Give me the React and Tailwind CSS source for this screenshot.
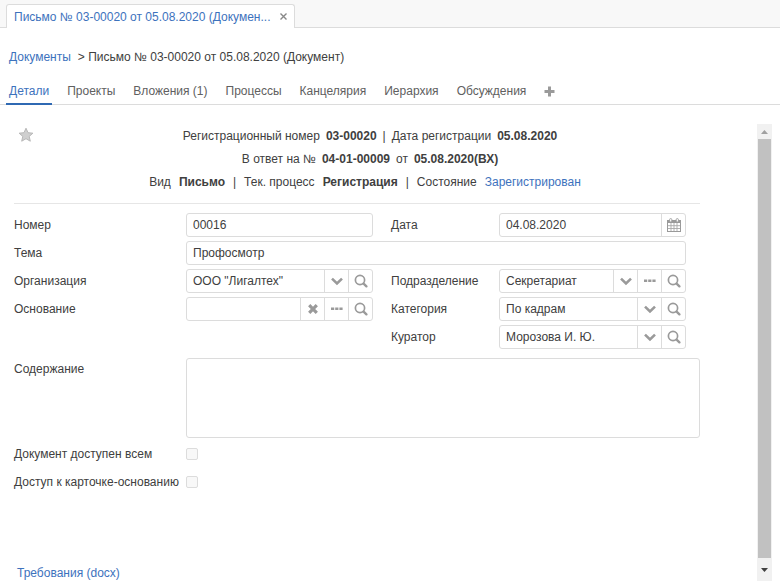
import React from "react";

function Svg({ children, box = "0 0 14 14", className = "size-[14px]" }) {
  return (
    <svg viewBox={box} className={className} aria-hidden="true">
      {children}
    </svg>
  );
}

function ChevronIcon() {
  return (
    <Svg>
      <path d="M2 4.6 7 9.4l5-4.8" fill="none" stroke="#9a9a9a" strokeWidth="2.6" />
    </Svg>
  );
}

function SearchIcon() {
  return (
    <Svg>
      <circle cx="6" cy="6" r="4.6" fill="none" stroke="#9a9a9a" strokeWidth="1.7" />
      <path d="M9.6 9.6 12.4 12.4" stroke="#9a9a9a" strokeWidth="2.3" strokeLinecap="round" />
    </Svg>
  );
}

function DotsIcon() {
  return (
    <Svg>
      <path d="M1 5.4h3.2v2.6H1zM5.2 5.4h3.2v2.6H5.2zM9.4 5.4h3.2v2.6H9.4z" fill="#9a9a9a" />
    </Svg>
  );
}

function ClearIcon() {
  return (
    <Svg>
      <path d="M3.2 3.2 10.8 10.8M10.8 3.2 3.2 10.8" stroke="#9a9a9a" strokeWidth="3.2" />
    </Svg>
  );
}

function CalendarIcon() {
  return (
    <Svg>
      <rect x="0.5" y="2.5" width="13" height="11" fill="#fff" stroke="#9a9a9a" />
      <path d="M1 3h12v2H1z" fill="#9a9a9a" />
      <path d="M4 5v8M7 5v8M10 5v8M1 7.7h12M1 10.5h12" stroke="#a8a8a8" strokeWidth="0.9" />
      <rect x="2.6" y="0.6" width="2.2" height="3.4" rx="1" fill="#fff" stroke="#9a9a9a" strokeWidth="0.9" />
      <rect x="9.2" y="0.6" width="2.2" height="3.4" rx="1" fill="#fff" stroke="#9a9a9a" strokeWidth="0.9" />
    </Svg>
  );
}

const icons = {
  search: { label: "Найти", Icon: SearchIcon },
  dots: { label: "Выбрать", Icon: DotsIcon },
  clear: { label: "Очистить", Icon: ClearIcon },
  calendar: { label: "Календарь", Icon: CalendarIcon },
};

function Field({ id, label, value, select = false, actions = [], wide = false }) {
  return (
    <>
      <label htmlFor={id} className="h-6 leading-6">
        {label}
      </label>
      <div
        className={
          "flex h-6 min-w-0 overflow-hidden rounded-[3px] border border-[#dcdcdc] bg-white " +
          (wide ? "col-span-4" : "")
        }
      >
        {select ? (
          <div className="relative min-w-0 flex-1">
            <select id={id} defaultValue={value} className="h-full w-full appearance-none bg-transparent pl-1.5 pr-6 outline-none">
              <option>{value}</option>
            </select>
            <span className="pointer-events-none absolute inset-y-0 right-0 flex w-6 items-center justify-center border-l border-[#dcdcdc]">
              <ChevronIcon />
            </span>
          </div>
        ) : (
          <input id={id} defaultValue={value} className="min-w-0 flex-1 px-1.5 outline-none" />
        )}
        {actions.map((name) => {
          const { label: text, Icon } = icons[name];
          return (
            <button
              key={name}
              type="button"
              aria-label={text}
              className="flex w-6 shrink-0 items-center justify-center border-l border-[#dcdcdc]"
            >
              <Icon />
            </button>
          );
        })}
      </div>
    </>
  );
}

const tabs = ["Детали", "Проекты", "Вложения (1)", "Процессы", "Канцелярия", "Иерархия", "Обсуждения"];

export default function App() {
  return (
    <div className="min-h-screen bg-white font-['Liberation_Sans',Arial,sans-serif] text-[12px] leading-4 text-[#404040]">
      <header className="flex h-7 items-end border-b border-[#dcdcdc] bg-[#f8f8f8] pl-1.5">
        <div className="-mb-px flex h-6 items-center gap-2.5 rounded-t-[3px] border border-b-0 border-[#dcdcdc] bg-white px-[7px]">
          <a href="#document" className="text-[#3d72bd]">
            Письмо № 03-00020 от 05.08.2020 (Докумен...
          </a>
          <button type="button" aria-label="Закрыть">
            <Svg box="0 0 7 7" className="size-[7px]">
              <path d="M0.5 0.5 6.5 6.5M6.5 0.5 0.5 6.5" stroke="#888" strokeWidth="1.4" />
            </Svg>
          </button>
        </div>
      </header>

      <nav aria-label="Путь" className="flex gap-[7px] pl-[9px] pt-[21px]">
        <a href="#documents" className="text-[#3d72bd]">
          Документы
        </a>
        <span>&gt; Письмо № 03-00020 от 05.08.2020 (Документ)</span>
      </nav>

      <nav aria-label="Разделы" className="mt-[13px] flex h-[27px] items-stretch gap-3 border-b border-[#dcdcdc] pl-1.5">
        {tabs.map((tab, i) => (
          <a
            key={tab}
            href={"#tab-" + i}
            className={
              "-mb-px border-b-2 px-[3px] pt-[5px] " +
              (i === 0 ? "border-[#2f69b3] text-[#3d72bd]" : "border-transparent text-[#606060]")
            }
          >
            {tab}
          </a>
        ))}
        <button type="button" aria-label="Добавить" className="flex items-center px-[3px]">
          <Svg box="0 0 11 11" className="size-[11px]">
            <path d="M5.5 0.5v10M0.5 5.5h10" stroke="#9a9a9a" strokeWidth="3" />
          </Svg>
        </button>
      </nav>

      <div className="flex pb-1.5 pl-[14px] pr-2 pt-[19px]">
        <main className="mr-[57px] min-w-0 flex-1">
          <div className="relative flex flex-col items-center gap-[7px] border-b border-[#e6e6e6] pb-[13px] pl-[26px] pt-1">
            <button type="button" aria-label="Избранное" className="absolute left-1 top-[3px]">
              <Svg box="0 0 16 16" className="size-4">
                <path
                  d="M8 1.2 10 5.7l4.9.5-3.7 3.2 1.1 4.8L8 11.7l-4.3 2.5 1.1-4.8L1.1 6.2 6 5.7z"
                  fill="#cfcfcf"
                  stroke="#b8b8b8"
                />
              </Svg>
            </button>
            <p className="flex gap-1.5">
              <span>Регистрационный номер</span>
              <b>03-00020</b>
              <span>|</span>
              <span>Дата регистрации</span>
              <b>05.08.2020</b>
            </p>
            <p className="flex gap-1.5">
              <span>В ответ на №</span>
              <b>04-01-00009</b>
              <span>от</span>
              <b>05.08.2020(ВХ)</b>
            </p>
            <p className="flex gap-2 pr-2.5">
              <span>Вид</span>
              <b>Письмо</b>
              <span>|</span>
              <span>Тек. процесс</span>
              <b>Регистрация</b>
              <span>|</span>
              <span>Состояние</span>
              <a href="#state" className="text-[#3d72bd]">
                Зарегистрирован
              </a>
            </p>
          </div>

          <form>
            <div className="grid grid-cols-[172px_1fr_18px_108px_1fr] gap-y-1 pr-[14px] pt-[9px]">
              <Field id="number" label="Номер" value="00016" />
              <span />
              <Field id="date" label="Дата" value="04.08.2020" actions={["calendar"]} />
              <Field id="subject" label="Тема" value="Профосмотр" wide />
              <Field id="org" label="Организация" value={'ООО "Лигалтех"'} select actions={["search"]} />
              <span />
              <Field id="unit" label="Подразделение" value="Секретариат" select actions={["dots", "search"]} />
              <Field id="basis" label="Основание" value="" actions={["clear", "dots", "search"]} />
              <span />
              <Field id="category" label="Категория" value="По кадрам" select actions={["search"]} />
              <span className="col-span-3" />
              <Field id="curator" label="Куратор" value="Морозова И. Ю." select actions={["search"]} />
            </div>

            <div className="mt-[9px] flex">
              <label htmlFor="content" className="w-[172px] shrink-0 pt-[3px]">
                Содержание
              </label>
              <textarea
                id="content"
                className="block h-20 min-w-0 flex-1 resize-none rounded-[3px] border border-[#dcdcdc] px-1.5 py-1 outline-none"
              />
            </div>

            <div className="mt-2 flex flex-col gap-3">
              <div className="flex items-center">
                <label htmlFor="public" className="w-[172px] shrink-0">
                  Документ доступен всем
                </label>
                <input id="public" type="checkbox" className="size-3 appearance-none rounded-[2px] border border-[#dcdcdc] bg-[#f8f8f8]" />
              </div>
              <div className="flex items-center">
                <label htmlFor="access" className="w-[172px] shrink-0 whitespace-nowrap">
                  Доступ к карточке-основанию
                </label>
                <input id="access" type="checkbox" className="size-3 appearance-none rounded-[2px] border border-[#dcdcdc] bg-[#f8f8f8]" />
              </div>
            </div>
          </form>

          <a href="#requirements" className="mt-[75px] block pl-[3px] text-[#3d72bd]">
            Требования (docx)
          </a>
        </main>

        <div aria-hidden="true" className="flex w-[15px] flex-col bg-[#f1f1f1]">
          <span className="flex h-[15px] items-center justify-center">
            <Svg box="0 0 7 4" className="h-1 w-[7px]">
              <path d="M0 4 3.5 0 7 4z" fill="#a0a0a0" />
            </Svg>
          </span>
          <span className="mx-px flex-1 bg-[#c1c1c1]" />
          <span className="flex h-[23px] items-center justify-center">
            <Svg box="0 0 7 4" className="h-1 w-[7px]">
              <path d="M0 0 3.5 4 7 0z" fill="#404040" />
            </Svg>
          </span>
        </div>
      </div>
    </div>
  );
}
